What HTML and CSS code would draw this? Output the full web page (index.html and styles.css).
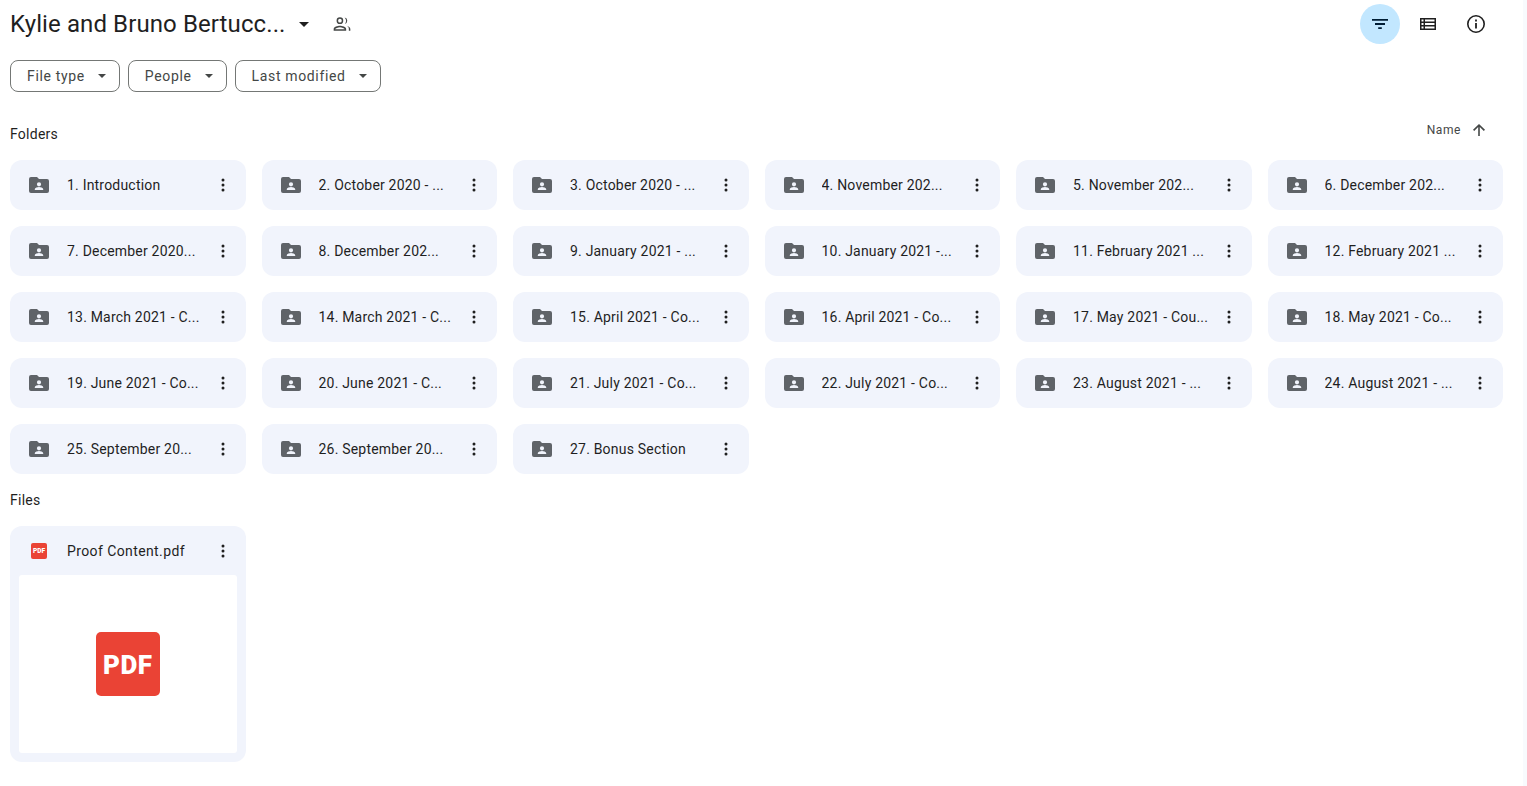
FILE: index.html
```html
<!DOCTYPE html>
<html lang="en">
<head>
<meta charset="utf-8">
<title>Kylie and Bruno Bertucci</title>
<link rel="stylesheet" href="styles.css">
</head>
<body>
<svg class="defs" width="0" height="0" aria-hidden="true">
  <symbol id="folder" viewBox="0 0 20 16"><path fill-rule="evenodd" d="M2 0h6l2 2h8a2 2 0 0 1 2 2v10a2 2 0 0 1-2 2H2a2 2 0 0 1-2-2V2a2 2 0 0 1 2-2zm8 5.200a2.100 2.100 0 1 0 0 4.200 2.100 2.100 0 0 0 0-4.200zM5.800 13h8.400v-.9c0-1.400-2.800-2.100-4.200-2.100s-4.200.7-4.200 2.100z"/></symbol>
  <symbol id="more" viewBox="0 0 4 14"><circle cx="2" cy="2" r="1.500"/><circle cx="2" cy="7" r="1.500"/><circle cx="2" cy="12" r="1.500"/></symbol>
</svg>
<main class="page">
  <header class="topbar">
    <div class="crumb">
      <h1 class="title">Kylie and Bruno Bertucc...</h1>
      <span class="caret caret-dark"></span>
      <svg class="shared" viewBox="0 0 24 24" width="20" height="20"><path d="M9.500 12a4 4 0 1 0 0-8 4 4 0 0 0 0 8zm0-6.200a2.200 2.200 0 1 1 0 4.400 2.200 2.200 0 0 1 0-4.400zM9.500 14c-2.700 0-7.500 1.300-7.500 4v2h15v-2c0-2.700-4.800-4-7.500-4zm-5.700 4.200c.3-.9 3.400-2.400 5.700-2.400s5.400 1.500 5.700 2.400zM15.200 4.100a4 4 0 0 1 0 7.800 5.900 5.900 0 0 0 0-7.800zM17.500 14.200c1.700.6 2.700 2 2.700 3.800v2H22v-2c0-1.900-2.200-3.200-4.500-3.800z"/></svg>
    </div>
    <div class="actions">
      <button class="round on" type="button"><svg viewBox="0 0 16 10" width="16" height="10"><path d="M0 0h16v1.800H0zM3 4.100h10v1.800H3zM6.200 8.200h3.600V10H6.200z"/></svg></button>
      <button class="round" type="button"><svg viewBox="0 0 16 12" width="16" height="12"><path fill-rule="evenodd" d="M0 0h16v12H0zM1.500 1.500v2h2v-2zM5 1.500v2h9.500v-2zM1.500 5v2h2V5zM5 5v2h9.500V5zM1.500 8.500v2h2v-2zM5 8.500v2h9.500v-2z"/></svg></button>
      <button class="round" type="button"><svg viewBox="0 0 18 18" width="18" height="18"><path fill-rule="evenodd" d="M9 0a9 9 0 1 1 0 18A9 9 0 0 1 9 0zm0 1.600a7.400 7.400 0 1 0 0 14.800A7.400 7.400 0 0 0 9 1.600zM8.100 8h1.800v5.500H8.100zM8.100 4.600h1.800v1.800H8.100z"/></svg></button>
    </div>
  </header>

  <div class="filters">
    <button class="chip" type="button">File type<span class="caret"></span></button>
    <button class="chip" type="button">People<span class="caret"></span></button>
    <button class="chip" type="button">Last modified<span class="caret"></span></button>
  </div>

  <div class="section-head">
    <h2 class="label">Folders</h2>
    <div class="sort">Name
      <svg viewBox="0 0 12 12" width="12" height="12"><path d="M5.200 12V3L1.200 6.900 0 5.800 6 0l6 5.800-1.200 1.100-4-3.900v9z"/></svg>
    </div>
  </div>

  <section class="grid">
    <div class="card"><svg class="ficon"><use href="#folder"/></svg><span class="name">1. Introduction</span><svg class="more"><use href="#more"/></svg></div>
    <div class="card"><svg class="ficon"><use href="#folder"/></svg><span class="name">2. October 2020 - ...</span><svg class="more"><use href="#more"/></svg></div>
    <div class="card"><svg class="ficon"><use href="#folder"/></svg><span class="name">3. October 2020 - ...</span><svg class="more"><use href="#more"/></svg></div>
    <div class="card"><svg class="ficon"><use href="#folder"/></svg><span class="name">4. November 202...</span><svg class="more"><use href="#more"/></svg></div>
    <div class="card"><svg class="ficon"><use href="#folder"/></svg><span class="name">5. November 202...</span><svg class="more"><use href="#more"/></svg></div>
    <div class="card"><svg class="ficon"><use href="#folder"/></svg><span class="name">6. December 202...</span><svg class="more"><use href="#more"/></svg></div>
    <div class="card"><svg class="ficon"><use href="#folder"/></svg><span class="name">7. December 2020...</span><svg class="more"><use href="#more"/></svg></div>
    <div class="card"><svg class="ficon"><use href="#folder"/></svg><span class="name">8. December 202...</span><svg class="more"><use href="#more"/></svg></div>
    <div class="card"><svg class="ficon"><use href="#folder"/></svg><span class="name">9. January 2021 - ...</span><svg class="more"><use href="#more"/></svg></div>
    <div class="card"><svg class="ficon"><use href="#folder"/></svg><span class="name">10. January 2021 -...</span><svg class="more"><use href="#more"/></svg></div>
    <div class="card"><svg class="ficon"><use href="#folder"/></svg><span class="name">11. February 2021 ...</span><svg class="more"><use href="#more"/></svg></div>
    <div class="card"><svg class="ficon"><use href="#folder"/></svg><span class="name">12. February 2021 ...</span><svg class="more"><use href="#more"/></svg></div>
    <div class="card"><svg class="ficon"><use href="#folder"/></svg><span class="name">13. March 2021 - C...</span><svg class="more"><use href="#more"/></svg></div>
    <div class="card"><svg class="ficon"><use href="#folder"/></svg><span class="name">14. March 2021 - C...</span><svg class="more"><use href="#more"/></svg></div>
    <div class="card"><svg class="ficon"><use href="#folder"/></svg><span class="name">15. April 2021 - Co...</span><svg class="more"><use href="#more"/></svg></div>
    <div class="card"><svg class="ficon"><use href="#folder"/></svg><span class="name">16. April 2021 - Co...</span><svg class="more"><use href="#more"/></svg></div>
    <div class="card"><svg class="ficon"><use href="#folder"/></svg><span class="name">17. May 2021 - Cou...</span><svg class="more"><use href="#more"/></svg></div>
    <div class="card"><svg class="ficon"><use href="#folder"/></svg><span class="name">18. May 2021 - Co...</span><svg class="more"><use href="#more"/></svg></div>
    <div class="card"><svg class="ficon"><use href="#folder"/></svg><span class="name">19. June 2021 - Co...</span><svg class="more"><use href="#more"/></svg></div>
    <div class="card"><svg class="ficon"><use href="#folder"/></svg><span class="name">20. June 2021 - C...</span><svg class="more"><use href="#more"/></svg></div>
    <div class="card"><svg class="ficon"><use href="#folder"/></svg><span class="name">21. July 2021 - Co...</span><svg class="more"><use href="#more"/></svg></div>
    <div class="card"><svg class="ficon"><use href="#folder"/></svg><span class="name">22. July 2021 - Co...</span><svg class="more"><use href="#more"/></svg></div>
    <div class="card"><svg class="ficon"><use href="#folder"/></svg><span class="name">23. August 2021 - ...</span><svg class="more"><use href="#more"/></svg></div>
    <div class="card"><svg class="ficon"><use href="#folder"/></svg><span class="name">24. August 2021 - ...</span><svg class="more"><use href="#more"/></svg></div>
    <div class="card"><svg class="ficon"><use href="#folder"/></svg><span class="name">25. September 20...</span><svg class="more"><use href="#more"/></svg></div>
    <div class="card"><svg class="ficon"><use href="#folder"/></svg><span class="name">26. September 20...</span><svg class="more"><use href="#more"/></svg></div>
    <div class="card"><svg class="ficon"><use href="#folder"/></svg><span class="name">27. Bonus Section</span><svg class="more"><use href="#more"/></svg></div>
  </section>

  <h2 class="label files-label">Files</h2>
  <section class="grid files-grid">
    <article class="file">
      <div class="file-head">
        <span class="pdf-small">PDF</span>
        <span class="name">Proof Content.pdf</span>
        <svg class="more"><use href="#more"/></svg>
      </div>
      <div class="preview"><span class="pdf-big">PDF</span></div>
    </article>
  </section>
</main>
</body>
</html>
```

FILE: styles.css
```css
* { box-sizing: border-box; }
html, body { margin: 0; height: 100%; overflow: hidden; background: #fff; }
body {
  font-family: Roboto, "Noto Sans", sans-serif;
  color: #1f1f1f;
  border-right: 4px solid #f8fafd;
}
.defs { position: absolute; }
.page { padding: 4px 20px 0 10px; }
.topbar { display: flex; justify-content: space-between; align-items: center; height: 40px; }
.crumb { display: flex; align-items: center; }
.title { margin: 0; font-size: 24px; font-weight: 400; line-height: 40px; letter-spacing: .1px; }
.caret {
  display: inline-block;
  width: 0; height: 0;
  border-left: 4px solid transparent;
  border-right: 4px solid transparent;
  border-top: 4px solid #444746;
  margin-left: 13px;
}
.caret-dark { border-left-width: 5px; border-right-width: 5px; border-top-width: 5px; border-top-color: #1f1f1f; margin-left: 13px; }
.shared { margin-left: 23px; fill: #444746; }
.actions { display: flex; gap: 8px; margin-right: 7px; }
.round {
  width: 40px; height: 40px; border: 0; border-radius: 50%; padding: 0;
  background: transparent; display: flex; align-items: center; justify-content: center;
}
.round svg { fill: #1f1f1f; }
.round.on { background: #c2e7ff; }
.round.on svg { fill: #001d35; }
.filters { display: flex; gap: 8px; margin-top: 16px; }
.chip {
  height: 32px; padding: 0 13px 0 16px;
  border: 1px solid #747775; border-radius: 8px; background: #fff;
  font: 14px/30px Roboto, sans-serif; letter-spacing: .65px; color: #444746;
  display: flex; align-items: center;
}
.section-head { display: flex; justify-content: space-between; align-items: center; margin-top: 26px; height: 32px; }
.label { margin: 0; font-size: 14px; font-weight: 400; line-height: 20px; color: #1f1f1f; letter-spacing: .25px; }
.sort { display: flex; align-items: center; gap: 12px; font-size: 12px; letter-spacing: .6px; color: #444746; margin-right: 18px; margin-top: -8px; }
.sort svg { fill: #444746; }
.grid { display: grid; grid-template-columns: repeat(6, 1fr); gap: 16px; margin-top: 10px; }
.files-grid { margin-top: 16px; }
.card {
  height: 50px; background: #f1f4fc; border-radius: 12px;
  display: flex; align-items: center; padding: 0 21px 0 19px;
}
.ficon { width: 20px; height: 16px; fill: #5f6368; flex: none; }
.name { flex: 1; margin-left: 18px; font-size: 14px; letter-spacing: .2px; white-space: nowrap; overflow: hidden; }
.more { width: 4px; height: 14px; fill: #1f1f1f; flex: none; }
.files-label { margin-top: 16px; }
.file { background: #f1f4fc; border-radius: 12px; height: 236px; padding: 0 9px 9px; display: flex; flex-direction: column; }
.file-head { height: 49px; display: flex; align-items: center; padding: 0 12px 0 12px; flex: none; }
.pdf-small {
  width: 16px; height: 16px; background: #ea4335; border-radius: 2px; color: #fff; flex: none;
  font: 900 6.500px/16px Roboto, sans-serif; letter-spacing: 0; text-align: center;
}
.file-head .name { margin-left: 20px; letter-spacing: .4px; }
.preview { flex: 1; background: #fff; border-radius: 3px; display: flex; align-items: center; justify-content: center; }
.pdf-big {
  width: 64px; height: 64px; background: #ea4335; border-radius: 5px; color: #fff;
  font: 900 26px/66px Roboto, sans-serif; text-align: center; letter-spacing: .5px;
}
```
